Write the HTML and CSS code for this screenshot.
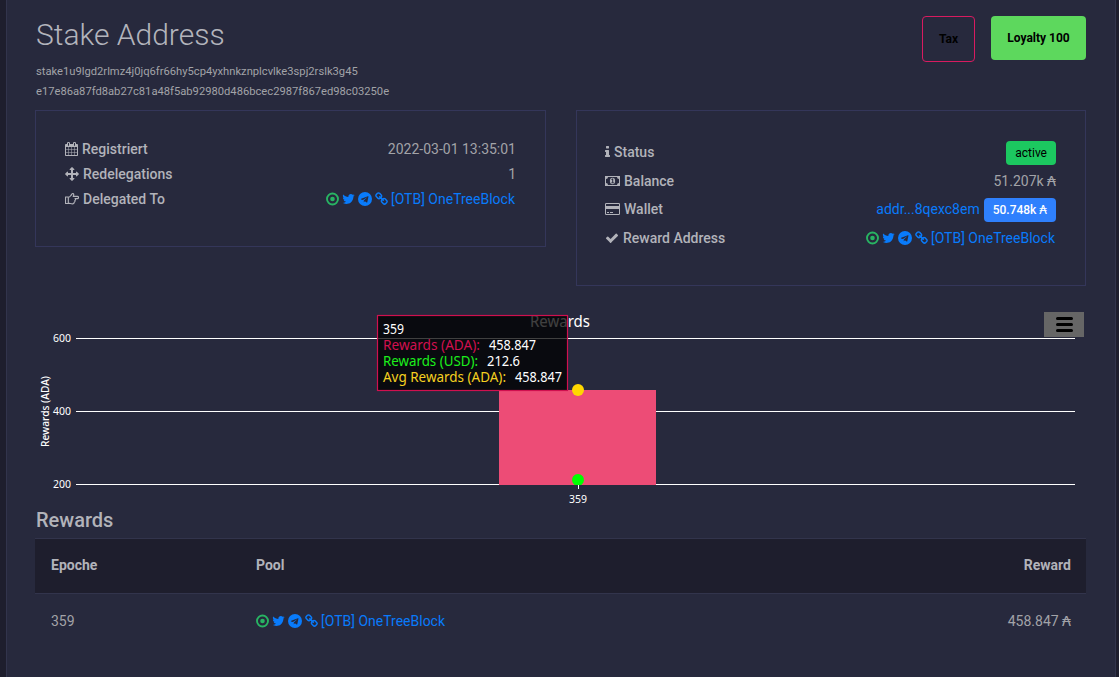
FILE: index.html
```
<!DOCTYPE html>
<html lang="de">
<head>
    <meta charset="UTF-8">
    <meta name="viewport" content="width=device-width, initial-scale=1.0">
    <title>Stake Address</title>
    <link rel="stylesheet" href="styles.css">
</head>
<body>

    <!-- shared icons -->
    <svg class="icon-defs" width="0" height="0">
        <symbol id="i-calendar" viewBox="64 0 1664 1792">
            <path d="M192 1664h288v-288h-288v288zm352 0h320v-288h-320v288zm-352-352h288v-320h-288v320zm352 0h320v-320h-320v320zm-352-384h288v-288h-288v288zm736 736h320v-288h-320v288zm-384-736h320v-288h-320v288zm768 736h288v-288h-288v288zm-384-352h320v-320h-320v320zm-352-864v-288q0-13-9.5-22.5t-22.5-9.5h-64q-13 0-22.5 9.5t-9.5 22.5v288q0 13 9.5 22.5t22.5 9.5h64q13 0 22.5-9.5t9.5-22.5zm736 864h288v-320h-288v320zm-384-384h320v-288h-320v288zm384 0h288v-288h-288v288zm32-480v-288q0-13-9.5-22.5t-22.5-9.5h-64q-13 0-22.5 9.5t-9.5 22.5v288q0 13 9.5 22.5t22.5 9.5h64q13 0 22.5-9.5t9.5-22.5zm384-64v1280q0 52-38 90t-90 38h-1408q-52 0-90-38t-38-90v-1280q0-52 38-90t90-38h128v-96q0-66 47-113t113-47h64q66 0 113 47t47 113v96h384v-96q0-66 47-113t113-47h64q66 0 113 47t47 113v96h128q52 0 90 38t38 90z"/>
        </symbol>
        <symbol id="i-arrows" viewBox="0 0 1792 1792">
            <path d="M1792 896q0 26-19 45l-256 256q-19 19-45 19t-45-19-19-45v-128h-384v384h128q26 0 45 19t19 45-19 45l-256 256q-19 19-45 19t-45-19l-256-256q-19-19-19-45t19-45 45-19h128v-384h-384v128q0 26-19 45t-45 19-45-19l-256-256q-19-19-19-45t19-45l256-256q19-19 45-19t45 19 19 45v128h384v-384h-128q-26 0-45-19t-19-45 19-45l256-256q19-19 45-19t45 19l256 256q19 19 19 45t-19 45-45 19h-128v384h384v-128q0-26 19-45t45-19 45 19l256 256q19 19 19 45z"/>
        </symbol>
        <symbol id="i-hand" viewBox="0 0 14 14">
            <path d="M.5 5h2.8v6.5H.5zM3.3 5.3c1.7 0 2.2-1.500 3-2.300.5-.5.6-1.500 1.400-1.500 1.300 0 1.300 1.500.5 2.900h4.200c1.500 0 1.500 2.200 0 2.200H10c.9.600.6 1.700-.2 1.900.4.8 0 1.600-.7 1.700.1 1-.5 1.700-1.500 1.700-1.900 0-2.600-.7-4.300-.8" fill="none" stroke="currentColor" stroke-width="1.15" stroke-linejoin="round"/>
        </symbol>
        <symbol id="i-info" viewBox="576 0 640 1792">
            <path d="M1216 1344v128q0 26-19 45t-45 19h-512q-26 0-45-19t-19-45v-128q0-26 19-45t45-19h64v-384h-64q-26 0-45-19t-19-45v-128q0-26 19-45t45-19h384q26 0 45 19t19 45v576h64q26 0 45 19t19 45zm-128-1152v192q0 26-19 45t-45 19h-256q-26 0-45-19t-19-45v-192q0-26 19-45t45-19h256q26 0 45 19t19 45z"/>
        </symbol>
        <symbol id="i-money" viewBox="0 0 15 14">
            <path d="M0 2h15v10H0zM3 3a2 2 0 0 1-2 2v4a2 2 0 0 1 2 2h9a2 2 0 0 1 2-2V5a2 2 0 0 1-2-2z" fill-rule="evenodd"/>
            <ellipse cx="7.500" cy="7" rx="2.600" ry="3.300"/>
            <path class="hole" d="M6.300 5.300l1-.8h.9v3.900h.9v.9H6.200v-.9h1V5.700l-.5.300z"/>
        </symbol>
        <symbol id="i-card" viewBox="0 0 15 14">
            <path d="M1.300 1h12.400A1.300 1.300 0 0 1 15 2.300v9.400a1.300 1.300 0 0 1-1.300 1.300H1.300A1.300 1.300 0 0 1 0 11.700V2.300A1.300 1.300 0 0 1 1.300 1zM1.300 2q-.3 0-.3.3V4h13V2.300q0-.3-.3-.3zM1 7v4.700q0 .3.3.3h12.400q.3 0 .3-.3V7zM2 10h2v1H2zM5 10h3v1H5z" fill-rule="evenodd"/>
        </symbol>
        <symbol id="i-check" viewBox="0 0 1792 1792">
            <path d="M1671 566q0 40-28 68l-724 724-136 136q-28 28-68 28t-68-28l-136-136-362-362q-28-28-28-68t28-68l136-136q28-28 68-28t68 28l294 295 656-657q28-28 68-28t68 28l136 136q28 28 28 68z"/>
        </symbol>
        <symbol id="i-dot" viewBox="0 0 13 14">
            <circle cx="6.500" cy="7" r="5.500" fill="none" stroke="currentColor" stroke-width="1.900"/>
            <circle cx="6.500" cy="7" r="2.300"/>
        </symbol>
        <symbol id="i-twitter" viewBox="64 0 1664 1792">
            <path d="M1684 408q-67 98-162 167 1 14 1 42 0 130-38 259.500t-115.500 248.500-184.500 210.500-258 146-323 54.500q-271 0-496-145 35 4 78 4 225 0 401-138-105-2-188-64.500t-114-159.500q33 5 61 5 43 0 85-11-112-23-185.500-111.500t-73.500-205.500v-4q68 38 146 41-66-44-105-115t-39-154q0-88 44-163 121 149 294.500 238.500t371.500 99.500q-8-38-8-74 0-134 94.500-228.500t228.500-94.500q140 0 236 102 109-21 205-78-37 115-142 178 93-10 186-50z"/>
        </symbol>
        <symbol id="i-telegram" viewBox="0 0 1792 1792">
            <circle cx="896" cy="896" r="896"/>
            <path class="hole" d="M1189 1307l147-693q9-44-10.500-63t-51.500-7l-864 333q-29 11-39.500 25t-2.500 26.500 32 19.500l221 69 513-323q21-14 32-6 7 5-4 15l-415 375-16 228q23 0 45-22l108-104 224 165q64 36 81-38z"/>
        </symbol>
        <symbol id="i-link" viewBox="64 0 1664 1792">
            <path d="M1520 1216q0-40-28-68l-208-208q-28-28-68-28-42 0-72 32 3 3 19 18.500t21.500 21.500 15 19 13 25.500 3.500 27.500q0 40-28 68t-68 28q-15 0-27.500-3.500t-25.500-13-19-15-21.500-21.500-18.500-19q-33 31-33 73 0 40 28 68l206 207q27 27 68 27 40 0 68-26l147-146q28-28 28-67zm-703-705q0-40-28-68l-206-207q-28-28-68-28-39 0-68 27l-147 146q-28 28-28 67 0 40 28 68l208 208q27 27 68 27 42 0 72-31-3-3-19-18.500t-21.500-21.500-15-19-13-25.500-3.500-27.500q0-40 28-68t68-28q15 0 27.500 3.500t25.500 13 19 15 21.500 21.500 18.500 19q33-31 33-73zm895 705q0 120-85 203l-147 146q-83 83-203 83-121 0-204-85l-206-207q-83-83-83-203 0-123 88-209l-88-88q-86 88-208 88-120 0-204-84l-208-208q-84-84-84-204t85-203l147-146q83-83 203-83 121 0 204 85l206 207q83 83 83 203 0 123-88 209l88 88q86-88 208-88 120 0 204 84l208 208q84 84 84 204z"/>
        </symbol>
    </svg>

    <main class="card">
        <header class="card-header">
            <div>
                <h1>Stake Address</h1>
                <p class="hash">stake1u9lgd2rlmz4j0jq6fr66hy5cp4yxhnkznplcvlke3spj2rslk3g45</p>
                <p class="hash">e17e86a87fd8ab27c81a48f5ab92980d486bcec2987f867ed98c03250e</p>
            </div>
            <div class="actions">
                <button class="btn btn-tax">Tax</button>
                <button class="btn btn-loyalty">Loyalty 100</button>
            </div>
        </header>

        <section class="panels">
            <div class="panel">
                <div class="line">
                    <span class="label"><svg class="icon w13"><use href="#i-calendar"/></svg>Registriert</span>
                    <span>2022-03-01 13:35:01</span>
                </div>
                <div class="line">
                    <span class="label"><svg class="icon w14"><use href="#i-arrows"/></svg>Redelegations</span>
                    <span>1</span>
                </div>
                <div class="line">
                    <span class="label"><svg class="icon w14"><use href="#i-hand"/></svg>Delegated To</span>
                    <span class="pool">
                        <svg class="icon w13 online"><use href="#i-dot"/></svg>
                        <svg class="icon w13"><use href="#i-twitter"/></svg>
                        <svg class="icon w14"><use href="#i-telegram"/></svg>
                        <svg class="icon w13"><use href="#i-link"/></svg>
                        <a href="#">[OTB] OneTreeBlock</a>
                    </span>
                </div>
            </div>

            <div class="panel panel-status">
                <div class="line line-badge">
                    <span class="label"><svg class="icon w5"><use href="#i-info"/></svg>Status</span>
                    <span class="badge badge-active">active</span>
                </div>
                <div class="line">
                    <span class="label"><svg class="icon w15"><use href="#i-money"/></svg>Balance</span>
                    <span>51.207k ₳</span>
                </div>
                <div class="line line-badge">
                    <span class="label"><svg class="icon w15"><use href="#i-card"/></svg>Wallet</span>
                    <span class="wallet"><a href="#">addr...8qexc8em</a><span class="badge badge-amount">50.748k ₳</span></span>
                </div>
                <div class="line">
                    <span class="label"><svg class="icon w14"><use href="#i-check"/></svg>Reward Address</span>
                    <span class="pool">
                        <svg class="icon w13 online"><use href="#i-dot"/></svg>
                        <svg class="icon w13"><use href="#i-twitter"/></svg>
                        <svg class="icon w14"><use href="#i-telegram"/></svg>
                        <svg class="icon w13"><use href="#i-link"/></svg>
                        <a href="#">[OTB] OneTreeBlock</a>
                    </span>
                </div>
            </div>
        </section>

        <!-- rewards chart -->
        <svg class="chart" viewBox="35 301 1051 206" width="1051" height="206">
            <g class="grid">
                <path d="M76 338.500H1075M76 411.500H1075M76 484.500H1075"/>
                <path d="M578.500 485v4"/>
            </g>
            <rect class="bar" x="499" y="390" width="157" height="95"/>
            <g class="axis">
                <text x="53" y="342" textLength="18" lengthAdjust="spacingAndGlyphs">600</text>
                <text x="53" y="415" textLength="18" lengthAdjust="spacingAndGlyphs">400</text>
                <text x="53" y="488" textLength="18" lengthAdjust="spacingAndGlyphs">200</text>
                <text x="569" y="503" textLength="18" lengthAdjust="spacingAndGlyphs">359</text>
                <text class="axis-title" transform="translate(49 447) rotate(-90)" textLength="71" lengthAdjust="spacingAndGlyphs">Rewards (ADA)</text>
            </g>
            <text class="chart-title" x="530" y="327" textLength="60" lengthAdjust="spacingAndGlyphs">Rewards</text>
            <rect class="menu" x="1044" y="312" width="40" height="25"/>
            <path class="menu-lines" d="M1057.500 318.500h14M1057.500 324.500h14M1057.500 330.500h14"/>
            <circle cx="578" cy="390" r="6" fill="#ffd700"/>
            <path d="M574.700 485a6 6 0 1 1 6.600 0z" fill="#00ff00"/>
            <g class="tip">
                <rect x="377.500" y="315.500" width="190" height="75"/>
                <text x="383" y="334" textLength="21" lengthAdjust="spacingAndGlyphs">359</text>
                <text class="ada" x="383" y="350" textLength="97" lengthAdjust="spacingAndGlyphs">Rewards (ADA):</text>
                <text x="489" y="350" textLength="47" lengthAdjust="spacingAndGlyphs">458.847</text>
                <text class="usd" x="383" y="366" textLength="95" lengthAdjust="spacingAndGlyphs">Rewards (USD):</text>
                <text x="487" y="366" textLength="33" lengthAdjust="spacingAndGlyphs">212.6</text>
                <text class="avg" x="383" y="382" textLength="123" lengthAdjust="spacingAndGlyphs">Avg Rewards (ADA):</text>
                <text x="515" y="382" textLength="47" lengthAdjust="spacingAndGlyphs">458.847</text>
            </g>
        </svg>

        <h2>Rewards</h2>
        <table>
            <thead>
                <tr>
                    <th class="col-epoch">Epoche</th>
                    <th>Pool</th>
                    <th class="right">Reward</th>
                </tr>
            </thead>
            <tbody>
                <tr>
                    <td>359</td>
                    <td>
                        <div class="pool">
                            <svg class="icon w13 online"><use href="#i-dot"/></svg>
                            <svg class="icon w13"><use href="#i-twitter"/></svg>
                            <svg class="icon w14"><use href="#i-telegram"/></svg>
                            <svg class="icon w13"><use href="#i-link"/></svg>
                            <a href="#">[OTB] OneTreeBlock</a>
                        </div>
                    </td>
                    <td class="right">458.847 ₳</td>
                </tr>
            </tbody>
        </table>
    </main>

</body>
</html>
```
FILE: styles.css
```
* {
    box-sizing: border-box;
}

body {
    margin: 0;
    height: 677px;
    overflow: hidden;
    background-color: #1e1e2d;
    color: #a2a3a8;
    font-family: Roboto, "DejaVu Sans", sans-serif;
    font-size: 14px;
    line-height: 25px;
}

a {
    color: #097bfb;
    text-decoration: none;
}

.icon-defs {
    position: absolute;
}

.card {
    height: 700px;
    margin: 0 3px 0 6px;
    padding: 15px 29px 0 28px;
    background-color: #27293d;
    border-left: 1px solid #32344c;
    border-right: 1px solid #32344c;
}

.card-header {
    display: flex;
    justify-content: space-between;
    align-items: flex-start;
    height: 95px;
}

h1 {
    margin: 0 0 7px;
    padding-left: 1px;
    font-size: 30px;
    font-weight: 300;
    line-height: 40px;
    color: #b3b4bc;
}

.hash {
    margin: 0;
    padding-left: 1px;
    font-size: 11.200px;
    line-height: 20px;
}

.actions {
    display: flex;
    align-items: flex-start;
    gap: 16px;
    padding-top: 1px;
}

.btn {
    font-family: inherit;
    font-size: 12px;
    font-weight: 700;
    color: #000;
    padding: 0 16px;
    height: 44px;
    border: none;
    border-radius: 4px;
    white-space: nowrap;
}

.btn-tax {
    width: 53px;
    height: 46px;
    background: transparent;
    border: 1px solid #d81b60;
    padding: 0;
}

.btn-loyalty {
    width: 95px;
    padding: 0;
    background-color: #5dd85d;
}

.panels {
    display: grid;
    grid-template-columns: 511px 510px;
    gap: 30px;
    align-items: start;
    height: 191px;
}

.panel {
    height: 137px;
    padding: 26px 29px;
    border: 1px solid #34365a;
}

.panel-status {
    height: 176px;
    padding-left: 28px;
    padding-top: 28px;
}

.line {
    display: flex;
    justify-content: space-between;
    align-items: center;
    height: 25px;
}

.panel-status .line {
    height: 28.500px;
}

.label {
    display: flex;
    align-items: center;
    gap: 4px;
    font-weight: 500;
    color: #b2b3ba;
}

.line-badge .label,
.wallet > a {
    margin-bottom: 2px;
}

.icon {
    height: 14px;
    margin-bottom: 1px;
    fill: currentColor;
    flex: none;
}

.hole {
    fill: #27293d;
}

.w5 { width: 5px; }
.w13 { width: 13px; }
.w14 { width: 14px; }
.w15 { width: 15px; }

.pool {
    display: flex;
    align-items: center;
    gap: 3px;
    margin-right: 1px;
    color: #097bfb;
}

.online {
    color: #28b463;
}

.wallet {
    display: flex;
    align-items: center;
    gap: 4px;
}

.badge {
    height: 24px;
    line-height: 24px;
    padding: 0 9px;
    border-radius: 4px;
    font-size: 12px;
}

.badge-active {
    background-color: #1cc860;
    color: #000;
}

.badge-amount {
    background-color: #2f80fd;
    color: #fff;
    font-weight: 500;
}

.chart {
    display: block;
    font-family: "Noto Sans", sans-serif;
}

.grid path {
    stroke: #fff;
    stroke-width: 1;
    fill: none;
}

.bar {
    fill: #ed4c76;
}

.axis text {
    fill: #fff;
    font-size: 11px;
}

.axis .axis-title {
    font-weight: 500;
}

.chart-title {
    fill: #fff;
    font-size: 16px;
}

.menu {
    fill: #666;
}

.menu-lines {
    stroke: #000;
    stroke-width: 3;
    stroke-linecap: round;
}

.tip rect {
    fill: rgba(0, 0, 0, 0.75);
    stroke: #d0104f;
    stroke-width: 1.200;
}

.tip text {
    fill: #fff;
    font-size: 13.500px;
}

.tip .ada { fill: #d0104f; }
.tip .usd { fill: #1cf01c; }
.tip .avg { fill: #f5d020; }

h2 {
    margin: 0;
    padding-left: 1px;
    height: 31px;
    font-size: 20px;
    font-weight: 500;
    line-height: 26px;
    color: #b2b3ba;
}

table {
    width: 1051px;
    border-collapse: separate;
    border-spacing: 0;
    table-layout: fixed;
}

th {
    height: 56px;
    padding: 0 15px 2px;
    text-align: left;
    font-weight: 700;
    color: #b2b3ba;
    background-color: #1e1e2d;
    border-top: 1px solid #32344c;
    border-bottom: 1px solid #32344c;
}

td {
    height: 55px;
    padding: 0 15px;
}

th:first-child,
td:first-child {
    padding-left: 16px;
}

.col-epoch {
    width: 206px;
}

.right {
    text-align: right;
}
```
